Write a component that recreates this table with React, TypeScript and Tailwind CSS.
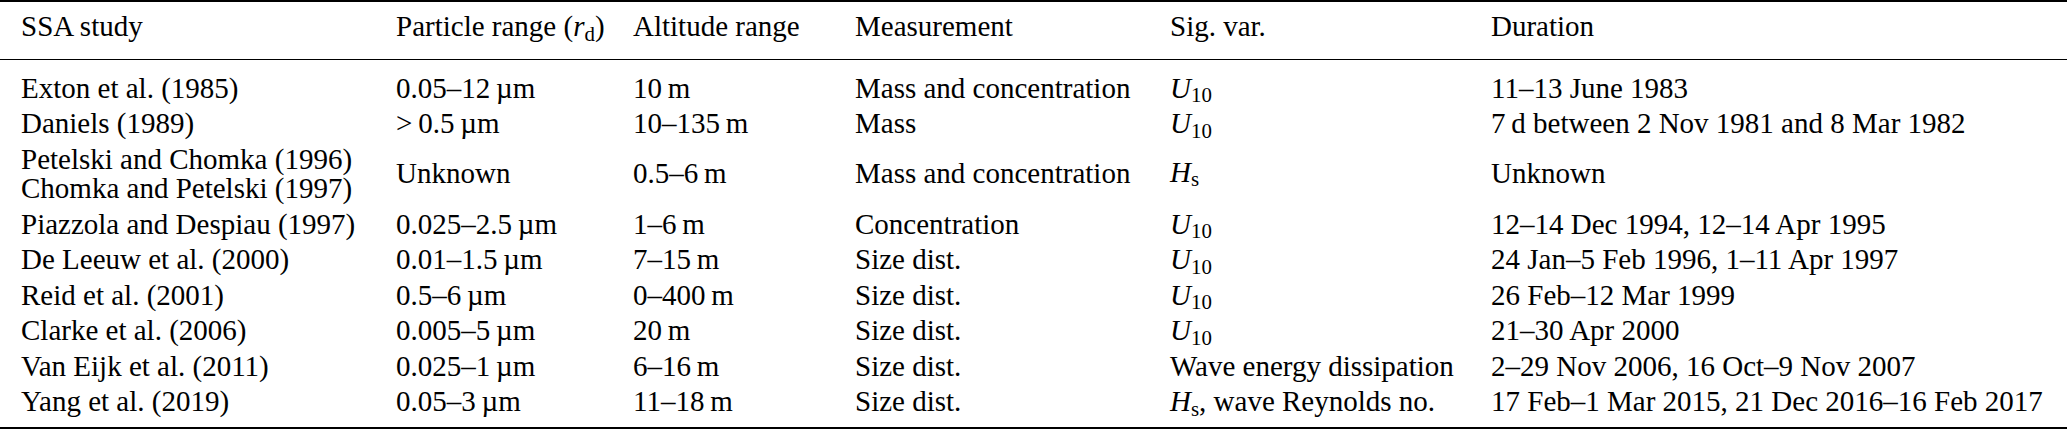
const cols = "grid grid-cols-[375px_237px_222px_315px_321px_1fr] pl-[21px]";

function Sub({ base, sub }: { base: string; sub: string }) {
  return (
    <span>
      <span className="italic">{base}</span>
      <span className="relative top-[0.22em] text-[0.72em]">{sub}</span>
    </span>
  );
}

const U10 = <Sub base="U" sub="10" />;
const Hs = <Sub base="H" sub="s" />;

type Row = [string, string, string, string, React.ReactNode, string];

const rowsTop: Row[] = [
  ["Exton et al. (1985)", "0.05–12\u2009µm", "10\u2009m", "Mass and concentration", U10, "11–13 June 1983"],
  ["Daniels (1989)", ">\u20090.5\u2009µm", "10–135\u2009m", "Mass", U10, "7\u2009d between 2 Nov 1981 and 8 Mar 1982"],
];

const rowsBottom: Row[] = [
  ["Piazzola and Despiau (1997)", "0.025–2.5\u2009µm", "1–6\u2009m", "Concentration", U10, "12–14 Dec 1994, 12–14 Apr 1995"],
  ["De Leeuw et al. (2000)", "0.01–1.5\u2009µm", "7–15\u2009m", "Size dist.", U10, "24 Jan–5 Feb 1996, 1–11 Apr 1997"],
  ["Reid et al. (2001)", "0.5–6\u2009µm", "0–400\u2009m", "Size dist.", U10, "26 Feb–12 Mar 1999"],
  ["Clarke et al. (2006)", "0.005–5\u2009µm", "20\u2009m", "Size dist.", U10, "21–30 Apr 2000"],
  ["Van Eijk et al. (2011)", "0.025–1\u2009µm", "6–16\u2009m", "Size dist.", "Wave energy dissipation", "2–29 Nov 2006, 16 Oct–9 Nov 2007"],
  [
    "Yang et al. (2019)",
    "0.05–3\u2009µm",
    "11–18\u2009m",
    "Size dist.",
    <span>
      {Hs}, wave Reynolds no.
    </span>,
    "17 Feb–1 Mar 2015, 21 Dec 2016–16 Feb 2017",
  ],
];

function DataRow({ row }: { row: Row }) {
  return (
    <div className={`${cols} h-[35.5px] leading-[35.5px]`}>
      {row.map((cell, i) => (
        <div key={i} className="whitespace-nowrap">
          {cell}
        </div>
      ))}
    </div>
  );
}

export default function App() {
  return (
    <div className="w-[2067px] h-[433px] bg-white text-black font-[family-name:Liberation_Serif,Times_New_Roman,serif] text-[29px] leading-[32px]">
      <div className="h-[2px] bg-black" />
      <div className={`${cols} pt-[8px] pb-[14px]`}>
        <div>SSA study</div>
        <div>
          Particle range (<Sub base="r" sub="d" />)
        </div>
        <div>Altitude range</div>
        <div>Measurement</div>
        <div>Sig. var.</div>
        <div>Duration</div>
      </div>
      <div className="h-px bg-black" />
      <div className="pt-[10.5px]">
        {rowsTop.map((r, i) => (
          <DataRow key={i} row={r} />
        ))}
        <div className={`${cols} h-[65px] items-center leading-[35.5px]`}>
          <div className="whitespace-nowrap self-start pt-[3px] leading-[29.5px]">
            <div>Petelski and Chomka (1996)</div>
            <div>Chomka and Petelski (1997)</div>
          </div>
          <div>Unknown</div>
          <div>0.5–6{"\u2009"}m</div>
          <div>Mass and concentration</div>
          <div>{Hs}</div>
          <div>Unknown</div>
        </div>
        {rowsBottom.map((r, i) => (
          <DataRow key={i} row={r} />
        ))}
      </div>
      <div className="h-[2px] bg-black mt-[7.5px]" />
    </div>
  );
}
